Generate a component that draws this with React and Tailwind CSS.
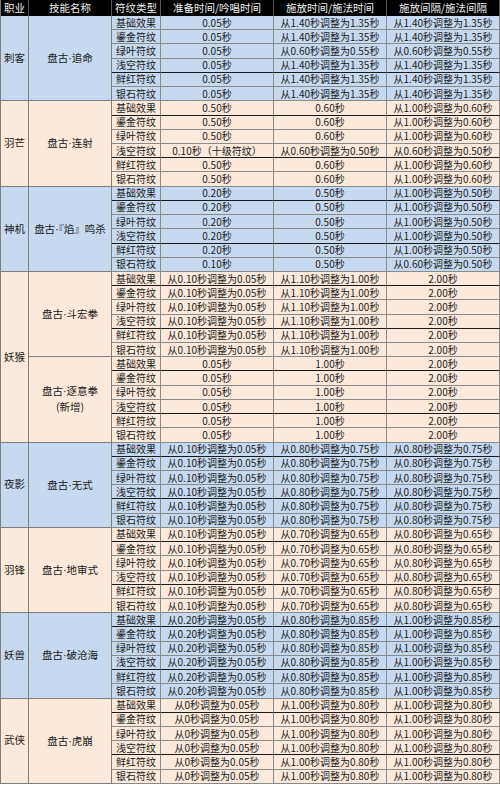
const RUNES = ["基础效果", "鎏金符纹", "绿叶符纹", "浅空符纹", "鲜红符纹", "银石符纹"];

const same = (a, b, c) => RUNES.map(() => [a, b, c]);

const groups = [
  {
    job: "刺客",
    blue: true,
    skills: [
      {
        name: [["盘古", "追命"]],
        rows: [
          ["0.05秒", "从1.40秒调整为1.35秒", "从1.40秒调整为1.35秒"],
          ["0.05秒", "从1.40秒调整为1.35秒", "从1.40秒调整为1.35秒"],
          ["0.05秒", "从0.60秒调整为0.55秒", "从0.60秒调整为0.55秒"],
          ["0.05秒", "从1.40秒调整为1.35秒", "从1.40秒调整为1.35秒"],
          ["0.05秒", "从1.40秒调整为1.35秒", "从1.40秒调整为1.35秒"],
          ["0.05秒", "从1.40秒调整为1.35秒", "从1.40秒调整为1.35秒"],
        ],
      },
    ],
  },
  {
    job: "羽芒",
    blue: false,
    skills: [
      {
        name: [["盘古", "连射"]],
        rows: [
          ["0.50秒", "0.60秒", "从1.00秒调整为0.60秒"],
          ["0.50秒", "0.60秒", "从1.00秒调整为0.60秒"],
          ["0.50秒", "0.60秒", "从1.00秒调整为0.60秒"],
          ["0.10秒（十级符纹）", "从0.60秒调整为0.50秒", "从0.60秒调整为0.50秒"],
          ["0.50秒", "0.60秒", "从1.00秒调整为0.60秒"],
          ["0.50秒", "0.60秒", "从1.00秒调整为0.60秒"],
        ],
      },
    ],
  },
  {
    job: "神机",
    blue: true,
    skills: [
      {
        name: [["盘古", "『焰』鸣杀"]],
        rows: [
          ["0.20秒", "0.50秒", "从1.00秒调整为0.50秒"],
          ["0.20秒", "0.50秒", "从1.00秒调整为0.50秒"],
          ["0.20秒", "0.50秒", "从1.00秒调整为0.50秒"],
          ["0.20秒", "0.50秒", "从1.00秒调整为0.50秒"],
          ["0.20秒", "0.50秒", "从1.00秒调整为0.50秒"],
          ["0.10秒", "0.50秒", "从0.60秒调整为0.50秒"],
        ],
      },
    ],
  },
  {
    job: "妖猴",
    blue: false,
    skills: [
      {
        name: [["盘古", "斗宏拳"]],
        rows: same("从0.10秒调整为0.05秒", "从1.10秒调整为1.00秒", "2.00秒"),
      },
      {
        name: [["盘古", "逐意拳"], ["(新增)"]],
        rows: same("0.05秒", "1.00秒", "2.00秒"),
      },
    ],
  },
  {
    job: "夜影",
    blue: true,
    skills: [
      {
        name: [["盘古", "无式"]],
        rows: same("从0.10秒调整为0.05秒", "从0.80秒调整为0.75秒", "从0.80秒调整为0.75秒"),
      },
    ],
  },
  {
    job: "羽锋",
    blue: false,
    skills: [
      {
        name: [["盘古", "地审式"]],
        rows: same("从0.10秒调整为0.05秒", "从0.70秒调整为0.65秒", "从0.80秒调整为0.65秒"),
      },
    ],
  },
  {
    job: "妖兽",
    blue: true,
    skills: [
      {
        name: [["盘古", "破沧海"]],
        rows: same("从0.20秒调整为0.05秒", "从0.80秒调整为0.85秒", "从1.00秒调整为0.85秒"),
      },
    ],
  },
  {
    job: "武侠",
    blue: false,
    skills: [
      {
        name: [["盘古", "虎崩"]],
        rows: same("从0秒调整为0.05秒", "从1.00秒调整为0.80秒", "从1.00秒调整为0.80秒"),
      },
    ],
  },
];

const HEAD = ["职业", "技能名称", "符纹类型", "准备时间/吟唱时间", "施放时间/施法时间", "施放间隔/施法间隔"];

function SkillName({ parts }) {
  if (parts.length === 1) return <span>{parts[0]}</span>;
  return (
    <span>
      {parts[0]}
      <span className="font-['Liberation_Sans']">·</span>
      {parts[1]}
    </span>
  );
}

export default function App() {
  const cells = [];
  HEAD.forEach((h) => {
    cells.push(
      <div key={"h" + h} className="flex items-center justify-center bg-black text-[#f0f0f0] text-[10.5px] border-r border-[#555] leading-none">
        {h}
      </div>
    );
  });

  groups.forEach((g, gi) => {
    const bg = g.blue ? "bg-[#c5d9f1]" : "bg-[#fde9d9]";
    cells.push(
      <div
        key={"j" + gi}
        className={`${bg} ${g.skills.length > 1 ? "row-span-12" : "row-span-6"} flex items-center justify-center border-r border-b border-[#7f7f7f] text-[10.5px]`}
      >
        {g.job}
      </div>
    );
    g.skills.forEach((s, si) => {
      cells.push(
        <div
          key={"s" + gi + si}
          className={`${bg} row-span-6 flex flex-col items-center justify-center border-r border-b border-[#7f7f7f] leading-[16px] text-[10.5px]`}
        >
          {s.name.map((n, ni) => (
            <SkillName key={ni} parts={n} />
          ))}
        </div>
      );
      s.rows.forEach((r, ri) => {
        const dark = ri === 0 || ri === 3;
        const bb = dark && !(gi === 0 && ri === 0) ? "border-b-[#1a1a1a]" : "border-b-[#8a8a8a]";
        [RUNES[ri], ...r].forEach((t, ci) => {
          cells.push(
            <div
              key={`c${gi}${si}${ri}${ci}`}
              className={`${bg} flex items-center justify-center whitespace-nowrap border-r border-b border-r-[#8a8a8a] ${bb}`}
            >
              {t}
            </div>
          );
        });
      });
    });
  });

  return (
    <div className="w-[500px] h-[786px] bg-white">
      <div
        className="grid grid-cols-[28px_83px_49px_113px_113px_113px] grid-rows-[16px_repeat(54,14.22px)] border-l border-[#7f7f7f] text-[10px] text-[#1a1a1a] leading-none"
        style={{ fontFamily: '"Noto Sans CJK SC", "Noto Sans", sans-serif' }}
      >
        {cells}
      </div>
    </div>
  );
}
